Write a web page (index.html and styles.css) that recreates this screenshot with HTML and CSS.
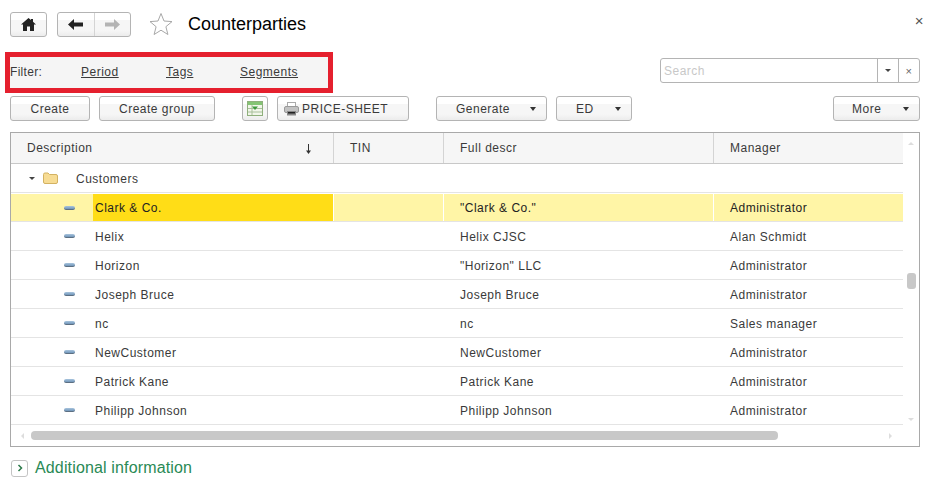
FILE: index.html
```html
<!DOCTYPE html>
<html>
	<head>
		<meta charset="UTF-8">
		<title>Counterparties</title>
		<link rel="stylesheet" href="styles.css">
	</head>
	<body>
		<header class="top">
			<button class="btn home">
				<svg width="15" height="13" viewBox="0 0 15 13"><path d="M7.500 0 0 6.500h2V13h4V8.500h3V13h4V6.500h2L12 3.800V1h-2v1.100z" fill="#222"/></svg>
			</button>
			<div class="btn nav">
				<span class="nav-part">
					<svg width="15" height="11" viewBox="0 0 15 11"><path d="M6 0 0 5.500 6 11V7.500h9v-4H6z" fill="#222"/></svg>
				</span>
				<span class="nav-part">
					<svg width="15" height="11" viewBox="0 0 15 11"><path d="M9 0l6 5.500L9 11V7.500H0v-4h9z" fill="#b4b4b4"/></svg>
				</span>
			</div>
			<svg class="star" width="24" height="24" viewBox="0 0 24 24"><path d="M12 1.500l3 7.500 8 .6-6.100 5.100 2 7.800L12 18.200l-6.900 4.300 2-7.800L1 9.600 9 9z" fill="none" stroke="#a8a8a8"/></svg>
			<h1>Counterparties</h1>
			<span class="close">×</span>
		</header>

		<div class="filter-row">
			<div class="filter">
				<span class="filter-label">Filter:</span>
				<a class="f1">Period</a>
				<a class="f2">Tags</a>
				<a class="f3">Segments</a>
			</div>
			<div class="search">
				<span class="search-text">Search</span>
				<span class="search-btn"><i class="tri small"></i></span>
				<span class="search-btn x">×</span>
			</div>
		</div>

		<div class="toolbar">
			<button class="btn b-create">Create</button>
			<button class="btn b-group">Create group</button>
			<button class="btn b-icon">
				<svg width="16" height="15" viewBox="0 0 16 15">
					<rect x=".5" y=".5" width="15" height="14" fill="#f1f6ea" stroke="#8fb07c"/>
					<rect x="1" y="1" width="14" height="3" fill="#84c474"/>
					<path d="M1 7.500h14M1 11h14M5 4v10" stroke="#a8bf9a"/>
					<path d="M5 5.500h6L8 9z" fill="#3c9a3c"/>
				</svg>
			</button>
			<button class="btn b-price">
				<svg width="15" height="14" viewBox="0 0 15 14">
					<rect x="3.500" y=".5" width="8" height="5" fill="#fff" stroke="#aaa"/>
					<rect x=".5" y="4.500" width="14" height="6" rx="1.500" fill="#c2c2c2" stroke="#999"/>
					<rect x="3" y="9" width="9" height="4.500" fill="#888"/>
					<rect x="4" y="10" width="7" height="1.500" fill="#222"/>
				</svg>
				PRICE-SHEET
			</button>
			<button class="btn menu b-gen">Generate<i class="tri"></i></button>
			<button class="btn menu b-ed">ED<i class="tri"></i></button>
			<button class="btn menu b-more">More<i class="tri"></i></button>
		</div>

		<div class="table">
			<div class="table-main">
				<div class="content">
					<div class="row head">
						<div class="cell first">Description
							<svg class="sort" width="7" height="10" viewBox="0 0 7 10"><path d="M3.500 0v9" stroke="#333"/><path d="M1 6.500h5L3.500 10z" fill="#333"/></svg>
						</div>
						<div class="cell">TIN</div>
						<div class="cell">Full descr</div>
						<div class="cell">Manager</div>
					</div>
					<div class="row group">
						<i class="tri small open"></i>
						<svg width="15" height="12" viewBox="0 0 15 12"><path d="M.5 2.500q0-1.500 1.500-1.500h3l1.500 1.500H13q1.500 0 1.500 1.500v6q0 1.500-1.500 1.500H2q-1.500 0-1.500-1.500z" fill="#f7dc94" stroke="#d3b262"/></svg>
						<span>Customers</span>
					</div>
					<div class="row selected">
						<div class="cell name"><i class="item"></i><span class="cur">Clark &amp; Co.</span></div>
						<div class="cell"></div>
						<div class="cell">"Clark &amp; Co."</div>
						<div class="cell">Administrator</div>
					</div>
					<div class="row">
						<div class="cell name"><i class="item"></i><span>Helix</span></div>
						<div class="cell"></div>
						<div class="cell">Helix CJSC</div>
						<div class="cell">Alan Schmidt</div>
					</div>
					<div class="row">
						<div class="cell name"><i class="item"></i><span>Horizon</span></div>
						<div class="cell"></div>
						<div class="cell">"Horizon" LLC</div>
						<div class="cell">Administrator</div>
					</div>
					<div class="row">
						<div class="cell name"><i class="item"></i><span>Joseph Bruce</span></div>
						<div class="cell"></div>
						<div class="cell">Joseph Bruce</div>
						<div class="cell">Administrator</div>
					</div>
					<div class="row">
						<div class="cell name"><i class="item"></i><span>nc</span></div>
						<div class="cell"></div>
						<div class="cell">nc</div>
						<div class="cell">Sales manager</div>
					</div>
					<div class="row">
						<div class="cell name"><i class="item"></i><span>NewCustomer</span></div>
						<div class="cell"></div>
						<div class="cell">NewCustomer</div>
						<div class="cell">Administrator</div>
					</div>
					<div class="row">
						<div class="cell name"><i class="item"></i><span>Patrick Kane</span></div>
						<div class="cell"></div>
						<div class="cell">Patrick Kane</div>
						<div class="cell">Administrator</div>
					</div>
					<div class="row">
						<div class="cell name"><i class="item"></i><span>Philipp Johnson</span></div>
						<div class="cell"></div>
						<div class="cell">Philipp Johnson</div>
						<div class="cell">Administrator</div>
					</div>
				</div>
				<div class="vscroll">
					<i class="arr up"></i>
					<div class="vtrack"><span class="vthumb"></span></div>
					<i class="arr down"></i>
				</div>
			</div>
			<div class="hscroll">
				<i class="arr left"></i>
				<div class="htrack"><span class="hthumb"></span></div>
				<i class="arr right"></i>
			</div>
		</div>

		<div class="more-info">
			<span class="expander">
				<svg width="6" height="8" viewBox="0 0 6 8"><path d="M1.500 1 4.500 4 1.500 7" fill="none" stroke="#2c7a4b" stroke-width="1.500"/></svg>
			</span>
			<a>Additional information</a>
		</div>
	</body>
</html>
```

FILE: styles.css
```css
*{
	box-sizing: border-box;
}
body{
	margin:0;
	height:490px;
	overflow: hidden;
	background:#fff;
	font:12px "Liberation Sans",Arial,sans-serif;
	letter-spacing:.5px;
	color:#3a3a3a;
}
button{
	font:inherit;
	letter-spacing:inherit;
	color:inherit;
	padding:0;
}
i{
	display:block;
}
.btn{
	display:flex;
	align-items:center;
	justify-content:center;
	height:25px;
	border:1px solid #b4b4b4;
	border-radius:3px;
	background:linear-gradient(#fff 0,#fff 30%,#f6f6f6 31%,#f6f6f6 75%,#ececec 100%);
}
.menu{
	justify-content:space-between;
	padding:0 10px 0 19px;
}
.tri{
	width:0;
	height:0;
	border:3.500px solid transparent;
	border-bottom:0;
	border-top:4px solid #333;
}
.tri.small{
	border-width:3px 3px 0;
	border-top-color:#444;
}

/* header */
.top{
	display:flex;
	align-items:center;
	height:48px;
	padding:0 10px;
}
.home{
	width:37px;
}
.nav{
	width:74px;
	margin-left:10px;
}
.nav-part{
	flex:1;
	height:100%;
	display:flex;
	align-items:center;
	justify-content:center;
}
.nav-part+.nav-part{
	border-left:1px solid #d4d4d4;
}
.star{
	margin-left:18px;
}
h1{
	margin:0 0 0 15px;
	font-size:18px;
	font-weight:normal;
	letter-spacing:0;
	color:#000;
	flex:1;
}
.close{
	margin:-8px 1px 0 0;
	font-size:15px;
	color:#555;
}

/* filter */
.filter-row{
	display:flex;
	align-items:center;
	justify-content:space-between;
	height:41px;
	margin-top:4px;
	padding:0 15px 0 5px;
}
.filter{
	display:flex;
	align-items:center;
	width:328px;
	height:41px;
	padding-bottom:2px;
	border:5px solid #e5202e;
	background:#f5f5f5;
	font-size:12px;
}
.filter-label{
	width:71px;
	letter-spacing:.3px;
}
.filter a{
	text-decoration:underline;
}
.f1{
	width:85px;
}
.f2{
	width:74px;
}
.search{
	display:flex;
	width:260px;
	height:25px;
	margin-top:-4px;
	border:1px solid #b4b4b4;
	border-radius:3px;
}
.search-text{
	flex:1;
	padding-left:3px;
	line-height:25px;
	color:#c8c8c8;
}
.search-btn{
	display:flex;
	align-items:center;
	justify-content:center;
	width:21px;
	border-left:1px solid #b4b4b4;
}
.search-btn.x{
	font-size:11px;
	color:#666;
}

/* toolbar */
.toolbar{
	display:flex;
	height:25px;
	margin-top:3px;
	padding:0 15px 0 10px;
}
.b-create{
	width:80px;
}
.b-group{
	width:116px;
	margin-left:9px;
}
.b-icon{
	width:26px;
	margin-left:27px;
}
.b-price{
	justify-content:flex-start;
	width:132px;
	margin-left:9px;
	padding-left:6px;
	gap:3px;
}
.b-gen{
	width:111px;
	margin-left:27px;
}
.b-ed{
	width:76px;
	margin-left:9px;
}
.b-more{
	width:87px;
	margin-left:auto;
	padding-left:18px;
}

/* table */
.table{
	width:910px;
	height:315px;
	margin:11px 0 0 10px;
	border:1px solid #a9a9a9;
	display:flex;
	flex-direction:column;
}
.table-main{
	display:flex;
	height:292px;
}
.content{
	width:892px;
}
.row{
	display:grid;
	grid-template-columns:323px 110px 270px 189px;
	grid-template-rows:28px;
	height:29px;
	border-bottom:1px solid #e4e4e4;
	line-height:30px;
}
.cell{
	padding-left:16px;
	white-space:nowrap;
}
.head{
	grid-template-rows:30px;
	height:31px;
	background:#f6f6f6;
	border-bottom:1px solid #c8c8c8;
	line-height:31px;
}
.head .cell{
	border-right:1px solid #d4d4d4;
}
.head .cell:last-child{
	border-right:0;
}
.first{
	display:flex;
	align-items:center;
	justify-content:space-between;
	padding-right:21px;
}
.sort{
	margin-top:1px;
}
.group{
	display:flex;
	align-items:center;
	height:29px;
	padding-left:18px;
}
.group svg{
	margin-left:8px;
}
.group span{
	margin:2px 0 0 18px;
}
.name{
	display:flex;
	align-items:center;
	padding-left:53px;
}
.item{
	width:11px;
	height:4px;
	border-radius:2px;
	background:linear-gradient(#a9c5de,#6f94b8);
	border-bottom:1px solid #5c6f82;
}
.name span{
	margin:2px 0 0 20px;
}
.selected .cell{
	margin-top:1px;
	background:#fff5a6;
	border-right:1px solid #fff;
	color:#222;
	line-height:28px;
}
.selected .cell:last-child{
	border-right:0;
}
.selected .name .cur{
	flex:1;
	align-self:stretch;
	margin:0 0 0 18px;
	padding-left:2px;
	background:#ffdd17;
}

/* scrollbars */
.arr{
	width:0;
	height:0;
	border:3px solid transparent;
}
.up{
	border-top:0;
	border-bottom:3px solid #ddd;
}
.down{
	border-bottom:0;
	border-top:3px solid #ddd;
}
.left{
	border-left:0;
	border-right:3px solid #ddd;
}
.right{
	border-right:0;
	border-left:3px solid #ddd;
}
.vscroll{
	flex:1;
	display:flex;
	flex-direction:column;
	align-items:center;
	padding:9px 0 4px;
}
.vtrack{
	flex:1;
	align-self:stretch;
	padding:128px 3px 0 4px;
}
.vthumb{
	display:block;
	height:16px;
	border-radius:3px;
	background:#c8c8c8;
}
.hscroll{
	flex:1;
	display:flex;
	align-items:center;
	padding:0 27px 0 10px;
}
.htrack{
	flex:1;
	padding-left:7px;
}
.hthumb{
	display:block;
	width:747px;
	height:9px;
	border-radius:4px;
	background:#c8c8c8;
}

/* bottom */
.more-info{
	display:flex;
	align-items:center;
	margin:12px 0 0 11px;
	gap:7px;
}
.expander{
	display:flex;
	align-items:center;
	justify-content:center;
	width:17px;
	height:17px;
	border:1px solid #c4c4c4;
	border-radius:3px;
}
.more-info a{
	font-size:16px;
	letter-spacing:.15px;
	color:#2a8a55;
}
```
